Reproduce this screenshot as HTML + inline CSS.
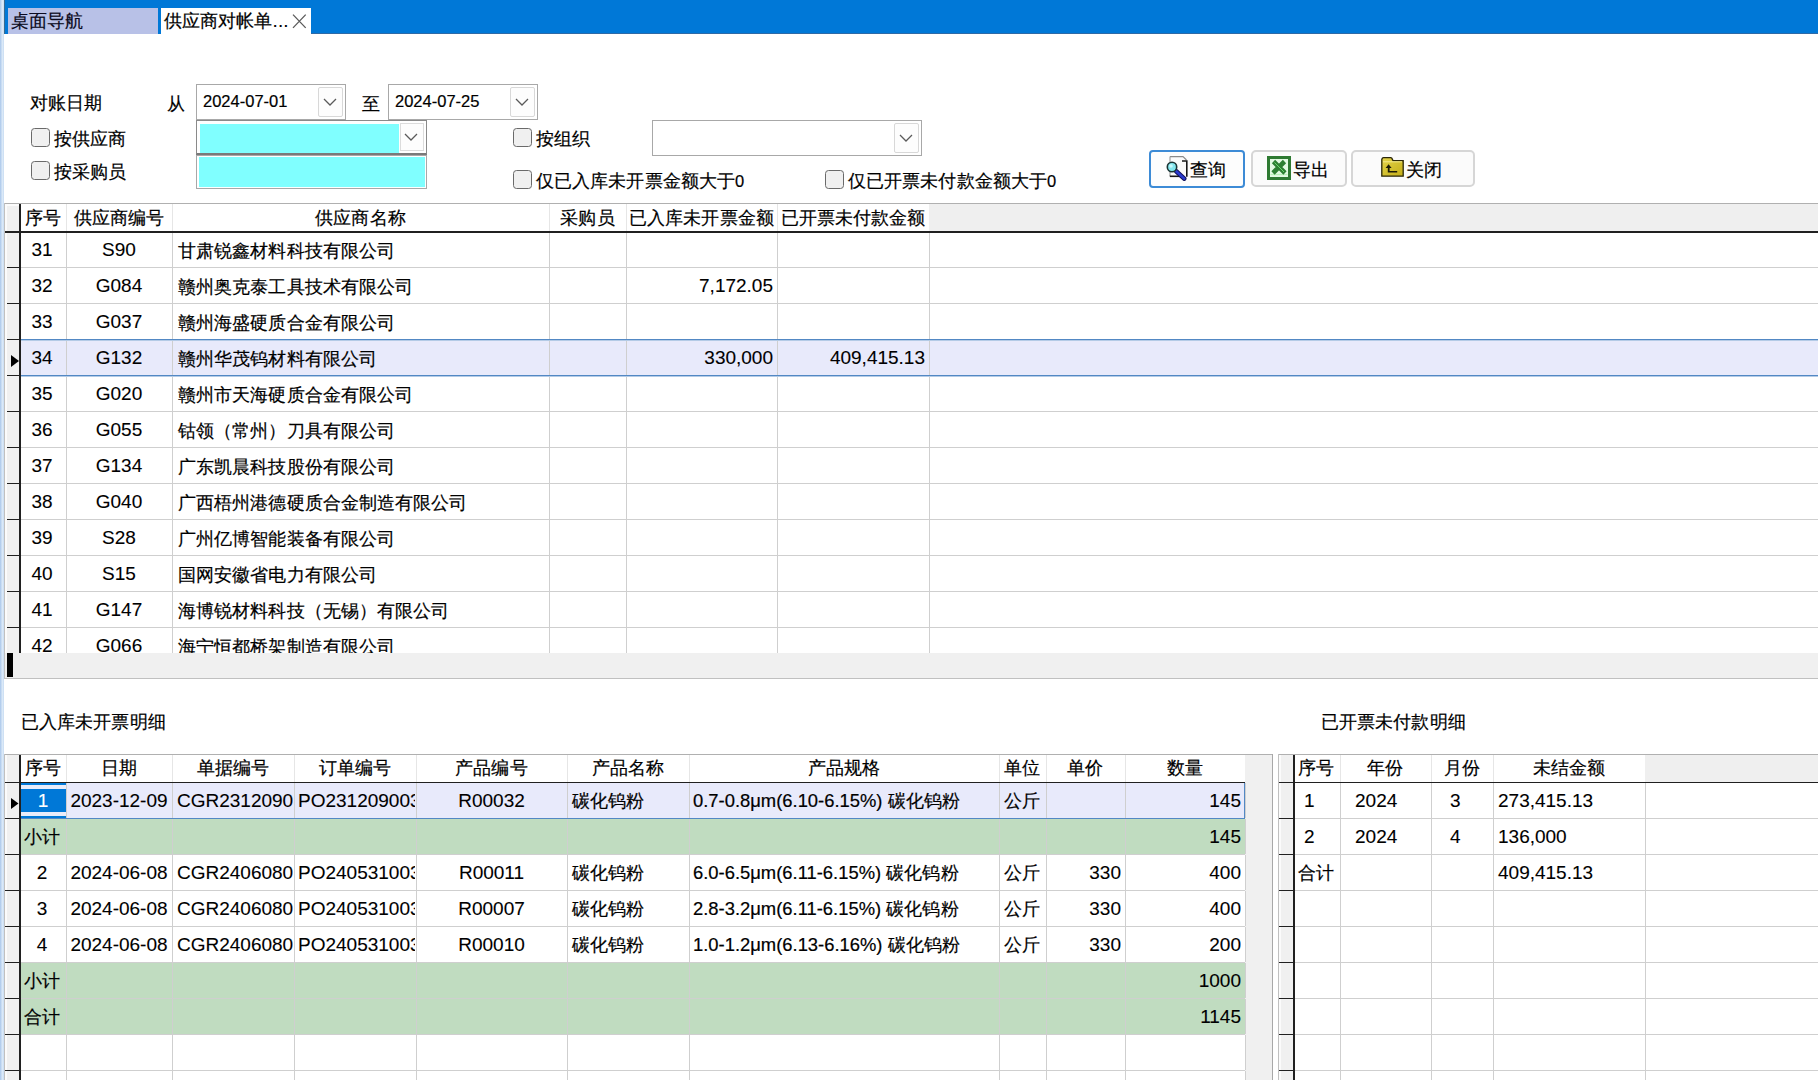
<!DOCTYPE html>
<html><head><meta charset="utf-8"><style>
html,body{margin:0;padding:0;}
body{width:1818px;height:1080px;overflow:hidden;position:relative;background:#fff;font-family:"Liberation Sans",sans-serif;font-size:18px;color:#000;}
body div{position:absolute;box-sizing:border-box;}
.t{white-space:nowrap;line-height:20px;height:20px;-webkit-text-stroke:0.2px currentColor;}
.c{font-size:18px;letter-spacing:0.1px}.l{font-size:19px;-webkit-text-stroke:0.1px currentColor}
</style></head><body>
<div style="left:0px;top:0px;width:4px;height:1080px;background:linear-gradient(90deg,#a9c6ea,#dceaf8 60%,#c8dcf2)"></div>
<div style="left:4px;top:0px;width:1814px;height:34px;background:#0078d7"></div>
<div style="left:4px;top:0px;width:1px;height:34px;background:#3a6a90"></div>
<div style="left:311px;top:33px;width:1507px;height:1px;background:#2f6aa6"></div>
<div style="left:8px;top:8px;width:150px;height:26px;background:#b8c1e7"></div>
<div style="left:161px;top:8px;width:150px;height:27px;background:#ffffff"></div>
<div class="t" style="left:11px;top:11px;color:#0a0a20"><span class="c">桌面导航</span></div>
<div class="t" style="left:164px;top:11px;color:#000"><span class="c">供应商对帐单</span><span class="l">...</span></div>
<svg style="position:absolute;left:292px;top:13px" width="15" height="16" viewBox="0 0 15 16"><path d="M1 1.6L13.7 14.9M13.7 1.6L1 14.9" stroke="#5a5a5a" stroke-width="1.3" fill="none"/></svg>
<div class="t" style="left:30px;top:93px;"><span class="c">对账日期</span></div>
<div class="t" style="left:167px;top:94px;"><span class="c">从</span></div>
<div class="t" style="left:362px;top:94px;"><span class="c">至</span></div>
<div style="left:196px;top:84px;width:150px;height:36px;background:#fff;border:1px solid #a8a8a8;box-sizing:border-box"></div>
<div style="left:318px;top:87px;width:25px;height:30px;background:#fdfdfd;border:1px solid #d8d8d8;box-sizing:border-box;border-radius:2px"></div>
<svg style="position:absolute;left:323px;top:98px" width="14" height="8" viewBox="0 0 14 8"><path d="M1 1L7.0 7L13 1" stroke="#5a5a5a" stroke-width="1.25" fill="none"/></svg>
<div class="t" style="left:203px;top:91px;font-size:16.5px">2024-07-01</div>
<div style="left:388px;top:84px;width:150px;height:36px;background:#fff;border:1px solid #a8a8a8;box-sizing:border-box"></div>
<div style="left:510px;top:87px;width:25px;height:30px;background:#fdfdfd;border:1px solid #d8d8d8;box-sizing:border-box;border-radius:2px"></div>
<svg style="position:absolute;left:515px;top:98px" width="14" height="8" viewBox="0 0 14 8"><path d="M1 1L7.0 7L13 1" stroke="#5a5a5a" stroke-width="1.25" fill="none"/></svg>
<div class="t" style="left:395px;top:91px;font-size:16.5px">2024-07-25</div>
<div style="left:196px;top:120px;width:231px;height:35px;background:#fff;border:1px solid #8a8a8a;border-bottom:2px solid #7a7a7a;box-sizing:border-box"></div>
<div style="left:200px;top:124px;width:199px;height:29px;background:#80ffff"></div>
<div style="left:400px;top:123px;width:24px;height:28px;background:#fdfdfd;border:1px solid #dcdcdc;box-sizing:border-box"></div>
<svg style="position:absolute;left:404px;top:133px" width="14" height="8" viewBox="0 0 14 8"><path d="M1 1L7.0 7L13 1" stroke="#5a5a5a" stroke-width="1.25" fill="none"/></svg>
<div style="left:196px;top:155px;width:231px;height:34px;background:#fff;border:1px solid #a8a8a8;box-sizing:border-box"></div>
<div style="left:199px;top:157px;width:226px;height:30px;background:#80ffff"></div>
<div style="left:652px;top:120px;width:270px;height:36px;background:#fff;border:1px solid #a8a8a8;box-sizing:border-box"></div>
<div style="left:894px;top:123px;width:25px;height:30px;background:#fdfdfd;border:1px solid #d8d8d8;box-sizing:border-box;border-radius:2px"></div>
<svg style="position:absolute;left:899px;top:134px" width="14" height="8" viewBox="0 0 14 8"><path d="M1 1L7.0 7L13 1" stroke="#5a5a5a" stroke-width="1.25" fill="none"/></svg>
<div style="left:31px;top:128px;width:19px;height:19px;background:#f0f0f0;border:1.8px solid #6a6a6a;box-sizing:border-box;border-radius:3.5px"></div>
<div class="t" style="left:54px;top:129px;"><span class="c">按供应商</span></div>
<div style="left:31px;top:161px;width:19px;height:19px;background:#f0f0f0;border:1.8px solid #6a6a6a;box-sizing:border-box;border-radius:3.5px"></div>
<div class="t" style="left:54px;top:162px;"><span class="c">按采购员</span></div>
<div style="left:513px;top:128px;width:19px;height:19px;background:#f0f0f0;border:1.8px solid #6a6a6a;box-sizing:border-box;border-radius:3.5px"></div>
<div class="t" style="left:536px;top:129px;"><span class="c">按组织</span></div>
<div style="left:513px;top:170px;width:19px;height:19px;background:#f0f0f0;border:1.8px solid #6a6a6a;box-sizing:border-box;border-radius:3.5px"></div>
<div class="t" style="left:536px;top:171px"><span class="c">仅已入库未开票金额大于</span><span style="font-size:16.5px">0</span></div>
<div style="left:825px;top:170px;width:19px;height:19px;background:#f0f0f0;border:1.8px solid #6a6a6a;box-sizing:border-box;border-radius:3.5px"></div>
<div class="t" style="left:848px;top:171px"><span class="c">仅已开票未付款金额大于</span><span style="font-size:16.5px">0</span></div>
<div style="left:1149px;top:150px;width:96px;height:38px;background:#fdfdfd;border:2px solid #3d8bd6;box-sizing:border-box;border-radius:4px"></div>
<div style="left:1251px;top:150px;width:96px;height:37px;background:#fbfbfb;border:2px solid #d6d6d6;box-sizing:border-box;border-radius:5px"></div>
<div style="left:1351px;top:150px;width:124px;height:37px;background:#fbfbfb;border:2px solid #d6d6d6;box-sizing:border-box;border-radius:5px"></div>
<div class="t" style="left:1190px;top:160px;"><span class="c">查询</span></div>
<div class="t" style="left:1293px;top:160px;"><span class="c">导出</span></div>
<div class="t" style="left:1406px;top:160px;"><span class="c">关闭</span></div>
<svg style="position:absolute;left:1164px;top:155px" width="26" height="26" viewBox="0 0 26 26">
<rect x="6" y="1.6" width="17" height="20" fill="#fbfbfb"/>
<path d="M6 1.6H19L22.5 5" stroke="#8a8a8a" stroke-width="1.1" fill="none"/>
<path d="M6 1.6V21" stroke="#9a9a9a" stroke-width="1.1" fill="none"/>
<path d="M18 6H22.8V21.7" stroke="#181818" stroke-width="1.6" fill="none"/>
<path d="M5.8 21.3H17" stroke="#181818" stroke-width="1.6" fill="none"/>
<path d="M12.2 16.2L20.2 23.6" stroke="#10105a" stroke-width="4.6" stroke-linecap="round"/>
<path d="M12.2 16.2L20.2 23.6" stroke="#2a3ad0" stroke-width="2.6" stroke-linecap="round"/>
<circle cx="8" cy="12" r="4.7" fill="#84e6ee" stroke="#1a3434" stroke-width="1.6"/>
<circle cx="7" cy="11" r="1.8" fill="#c8f8fa"/>
</svg>
<svg style="position:absolute;left:1267px;top:156px" width="24" height="24" viewBox="0 0 24 24">
<rect x="1.5" y="1.5" width="21" height="21" fill="#e2fae2" stroke="#2e7a32" stroke-width="3"/>
<path d="M3.5 18.5H20.5" stroke="#b8f0b8" stroke-width="1.2"/>
<path d="M6.5 5.5L18 17M17.5 5.5L6 17" stroke="#2c7f31" stroke-width="4.6"/>
<path d="M7.5 6.5L17 16" stroke="#6ad86e" stroke-width="1"/>
</svg>
<svg style="position:absolute;left:1381px;top:157px" width="23" height="20" viewBox="0 0 23 20">
<defs><linearGradient id="fg" x1="0" y1="0" x2="1" y2="1"><stop offset="0" stop-color="#e4d44a"/><stop offset="1" stop-color="#c4ae18"/></linearGradient></defs>
<path d="M0.8 3.6V19.2H22.2V3.6H12L10.8 1.2Q10.4 0.7 9.6 0.7H2.6Q1.8 0.7 1.4 1.2L0.8 2.4Z" fill="url(#fg)" stroke="#2a2608" stroke-width="1.3"/>
<path d="M2 4.8H21" stroke="#f4ea90" stroke-width="1"/>
<path d="M7.6 7.2L4.6 11H6.8V15.6H16.2V14H8.6V11H10.6Z" fill="#1c1a06"/>
</svg>
<div style="left:4px;top:203px;width:1814px;height:1px;background:#b0b0b0"></div>
<div style="left:4px;top:203px;width:1px;height:476px;background:#c0c0c0"></div>
<div style="left:5px;top:204px;width:14px;height:27px;background:#f0f0f0;border-left:2px solid #fbfbfb;border-top:2px solid #fbfbfb"></div>
<div style="left:20px;top:204px;width:909px;height:27px;background:#fff"></div>
<div style="left:929px;top:204px;width:889px;height:27px;background:#efefef"></div>
<div style="left:66px;top:204px;width:1px;height:27px;background:#e6e6e6"></div>
<div style="left:172px;top:204px;width:1px;height:27px;background:#e6e6e6"></div>
<div style="left:549px;top:204px;width:1px;height:27px;background:#e6e6e6"></div>
<div style="left:626px;top:204px;width:1px;height:27px;background:#e6e6e6"></div>
<div style="left:777px;top:204px;width:1px;height:27px;background:#e6e6e6"></div>
<div style="left:5px;top:231px;width:1813px;height:2px;background:#202020"></div>
<div style="left:5px;top:233px;width:14px;height:420px;background:#f0f0f0;border-left:2px solid #fbfbfb"></div>
<div style="left:19px;top:204px;width:2px;height:449px;background:#202020"></div>
<div class="t" style="left:20px;top:208px;width:46px;text-align:center;"><span class="c">序号</span></div>
<div class="t" style="left:66px;top:208px;width:106px;text-align:center;"><span class="c">供应商编号</span></div>
<div class="t" style="left:172px;top:208px;width:377px;text-align:center;"><span class="c">供应商名称</span></div>
<div class="t" style="left:549px;top:208px;width:77px;text-align:center;"><span class="c">采购员</span></div>
<div class="t" style="left:626px;top:208px;width:151px;text-align:center;"><span class="c">已入库未开票金额</span></div>
<div class="t" style="left:777px;top:208px;width:152px;text-align:center;"><span class="c">已开票未付款金额</span></div>
<div style="left:0;top:233px;width:1818px;height:420px;overflow:hidden">
<div style="left:66px;top:-1px;width:1px;height:35px;background:#cfcfcf"></div>
<div style="left:172px;top:-1px;width:1px;height:35px;background:#cfcfcf"></div>
<div style="left:549px;top:-1px;width:1px;height:35px;background:#cfcfcf"></div>
<div style="left:626px;top:-1px;width:1px;height:35px;background:#cfcfcf"></div>
<div style="left:777px;top:-1px;width:1px;height:35px;background:#cfcfcf"></div>
<div style="left:929px;top:-1px;width:1px;height:35px;background:#cfcfcf"></div>
<div style="left:21px;top:34px;width:1797px;height:1px;background:#cfcfcf"></div>
<div style="left:7px;top:34px;width:12px;height:1px;background:#202020"></div>
<div class="t" style="left:20px;top:7px;width:44px;text-align:center;"><span class="l">31</span></div>
<div class="t" style="left:66px;top:7px;width:106px;text-align:center;"><span class="l">S90</span></div>
<div class="t" style="left:178px;top:8px;"><span class="c">甘肃锐鑫材料科技有限公司</span></div>
<div style="left:66px;top:35px;width:1px;height:35px;background:#cfcfcf"></div>
<div style="left:172px;top:35px;width:1px;height:35px;background:#cfcfcf"></div>
<div style="left:549px;top:35px;width:1px;height:35px;background:#cfcfcf"></div>
<div style="left:626px;top:35px;width:1px;height:35px;background:#cfcfcf"></div>
<div style="left:777px;top:35px;width:1px;height:35px;background:#cfcfcf"></div>
<div style="left:929px;top:35px;width:1px;height:35px;background:#cfcfcf"></div>
<div style="left:21px;top:70px;width:1797px;height:1px;background:#cfcfcf"></div>
<div style="left:7px;top:70px;width:12px;height:1px;background:#202020"></div>
<div class="t" style="left:20px;top:43px;width:44px;text-align:center;"><span class="l">32</span></div>
<div class="t" style="left:66px;top:43px;width:106px;text-align:center;"><span class="l">G084</span></div>
<div class="t" style="left:178px;top:44px;"><span class="c">赣州奥克泰工具技术有限公司</span></div>
<div class="t" style="left:573px;top:43px;width:200px;text-align:right;"><span class="l">7,172.05</span></div>
<div style="left:66px;top:71px;width:1px;height:35px;background:#cfcfcf"></div>
<div style="left:172px;top:71px;width:1px;height:35px;background:#cfcfcf"></div>
<div style="left:549px;top:71px;width:1px;height:35px;background:#cfcfcf"></div>
<div style="left:626px;top:71px;width:1px;height:35px;background:#cfcfcf"></div>
<div style="left:777px;top:71px;width:1px;height:35px;background:#cfcfcf"></div>
<div style="left:929px;top:71px;width:1px;height:35px;background:#cfcfcf"></div>
<div style="left:21px;top:106px;width:1797px;height:1px;background:#5288c4"></div>
<div style="left:7px;top:106px;width:12px;height:1px;background:#202020"></div>
<div class="t" style="left:20px;top:79px;width:44px;text-align:center;"><span class="l">33</span></div>
<div class="t" style="left:66px;top:79px;width:106px;text-align:center;"><span class="l">G037</span></div>
<div class="t" style="left:178px;top:80px;"><span class="c">赣州海盛硬质合金有限公司</span></div>
<div style="left:21px;top:107px;width:1797px;height:35px;background:#e8eafb"></div>
<div style="left:66px;top:107px;width:1px;height:35px;background:#cfcfcf"></div>
<div style="left:172px;top:107px;width:1px;height:35px;background:#cfcfcf"></div>
<div style="left:549px;top:107px;width:1px;height:35px;background:#cfcfcf"></div>
<div style="left:626px;top:107px;width:1px;height:35px;background:#cfcfcf"></div>
<div style="left:777px;top:107px;width:1px;height:35px;background:#cfcfcf"></div>
<div style="left:929px;top:107px;width:1px;height:35px;background:#cfcfcf"></div>
<div style="left:21px;top:142px;width:1797px;height:1px;background:#5288c4"></div>
<div style="left:7px;top:142px;width:12px;height:1px;background:#202020"></div>
<div class="t" style="left:20px;top:115px;width:44px;text-align:center;"><span class="l">34</span></div>
<div class="t" style="left:66px;top:115px;width:106px;text-align:center;"><span class="l">G132</span></div>
<div class="t" style="left:178px;top:116px;"><span class="c">赣州华茂钨材料有限公司</span></div>
<div class="t" style="left:573px;top:115px;width:200px;text-align:right;"><span class="l">330,000</span></div>
<div class="t" style="left:725px;top:115px;width:200px;text-align:right;"><span class="l">409,415.13</span></div>
<div style="left:66px;top:143px;width:1px;height:35px;background:#cfcfcf"></div>
<div style="left:172px;top:143px;width:1px;height:35px;background:#cfcfcf"></div>
<div style="left:549px;top:143px;width:1px;height:35px;background:#cfcfcf"></div>
<div style="left:626px;top:143px;width:1px;height:35px;background:#cfcfcf"></div>
<div style="left:777px;top:143px;width:1px;height:35px;background:#cfcfcf"></div>
<div style="left:929px;top:143px;width:1px;height:35px;background:#cfcfcf"></div>
<div style="left:21px;top:178px;width:1797px;height:1px;background:#cfcfcf"></div>
<div style="left:7px;top:178px;width:12px;height:1px;background:#202020"></div>
<div class="t" style="left:20px;top:151px;width:44px;text-align:center;"><span class="l">35</span></div>
<div class="t" style="left:66px;top:151px;width:106px;text-align:center;"><span class="l">G020</span></div>
<div class="t" style="left:178px;top:152px;"><span class="c">赣州市天海硬质合金有限公司</span></div>
<div style="left:66px;top:179px;width:1px;height:35px;background:#cfcfcf"></div>
<div style="left:172px;top:179px;width:1px;height:35px;background:#cfcfcf"></div>
<div style="left:549px;top:179px;width:1px;height:35px;background:#cfcfcf"></div>
<div style="left:626px;top:179px;width:1px;height:35px;background:#cfcfcf"></div>
<div style="left:777px;top:179px;width:1px;height:35px;background:#cfcfcf"></div>
<div style="left:929px;top:179px;width:1px;height:35px;background:#cfcfcf"></div>
<div style="left:21px;top:214px;width:1797px;height:1px;background:#cfcfcf"></div>
<div style="left:7px;top:214px;width:12px;height:1px;background:#202020"></div>
<div class="t" style="left:20px;top:187px;width:44px;text-align:center;"><span class="l">36</span></div>
<div class="t" style="left:66px;top:187px;width:106px;text-align:center;"><span class="l">G055</span></div>
<div class="t" style="left:178px;top:188px;"><span class="c">钴领（常州）刀具有限公司</span></div>
<div style="left:66px;top:215px;width:1px;height:35px;background:#cfcfcf"></div>
<div style="left:172px;top:215px;width:1px;height:35px;background:#cfcfcf"></div>
<div style="left:549px;top:215px;width:1px;height:35px;background:#cfcfcf"></div>
<div style="left:626px;top:215px;width:1px;height:35px;background:#cfcfcf"></div>
<div style="left:777px;top:215px;width:1px;height:35px;background:#cfcfcf"></div>
<div style="left:929px;top:215px;width:1px;height:35px;background:#cfcfcf"></div>
<div style="left:21px;top:250px;width:1797px;height:1px;background:#cfcfcf"></div>
<div style="left:7px;top:250px;width:12px;height:1px;background:#202020"></div>
<div class="t" style="left:20px;top:223px;width:44px;text-align:center;"><span class="l">37</span></div>
<div class="t" style="left:66px;top:223px;width:106px;text-align:center;"><span class="l">G134</span></div>
<div class="t" style="left:178px;top:224px;"><span class="c">广东凯晨科技股份有限公司</span></div>
<div style="left:66px;top:251px;width:1px;height:35px;background:#cfcfcf"></div>
<div style="left:172px;top:251px;width:1px;height:35px;background:#cfcfcf"></div>
<div style="left:549px;top:251px;width:1px;height:35px;background:#cfcfcf"></div>
<div style="left:626px;top:251px;width:1px;height:35px;background:#cfcfcf"></div>
<div style="left:777px;top:251px;width:1px;height:35px;background:#cfcfcf"></div>
<div style="left:929px;top:251px;width:1px;height:35px;background:#cfcfcf"></div>
<div style="left:21px;top:286px;width:1797px;height:1px;background:#cfcfcf"></div>
<div style="left:7px;top:286px;width:12px;height:1px;background:#202020"></div>
<div class="t" style="left:20px;top:259px;width:44px;text-align:center;"><span class="l">38</span></div>
<div class="t" style="left:66px;top:259px;width:106px;text-align:center;"><span class="l">G040</span></div>
<div class="t" style="left:178px;top:260px;"><span class="c">广西梧州港德硬质合金制造有限公司</span></div>
<div style="left:66px;top:287px;width:1px;height:35px;background:#cfcfcf"></div>
<div style="left:172px;top:287px;width:1px;height:35px;background:#cfcfcf"></div>
<div style="left:549px;top:287px;width:1px;height:35px;background:#cfcfcf"></div>
<div style="left:626px;top:287px;width:1px;height:35px;background:#cfcfcf"></div>
<div style="left:777px;top:287px;width:1px;height:35px;background:#cfcfcf"></div>
<div style="left:929px;top:287px;width:1px;height:35px;background:#cfcfcf"></div>
<div style="left:21px;top:322px;width:1797px;height:1px;background:#cfcfcf"></div>
<div style="left:7px;top:322px;width:12px;height:1px;background:#202020"></div>
<div class="t" style="left:20px;top:295px;width:44px;text-align:center;"><span class="l">39</span></div>
<div class="t" style="left:66px;top:295px;width:106px;text-align:center;"><span class="l">S28</span></div>
<div class="t" style="left:178px;top:296px;"><span class="c">广州亿博智能装备有限公司</span></div>
<div style="left:66px;top:323px;width:1px;height:35px;background:#cfcfcf"></div>
<div style="left:172px;top:323px;width:1px;height:35px;background:#cfcfcf"></div>
<div style="left:549px;top:323px;width:1px;height:35px;background:#cfcfcf"></div>
<div style="left:626px;top:323px;width:1px;height:35px;background:#cfcfcf"></div>
<div style="left:777px;top:323px;width:1px;height:35px;background:#cfcfcf"></div>
<div style="left:929px;top:323px;width:1px;height:35px;background:#cfcfcf"></div>
<div style="left:21px;top:358px;width:1797px;height:1px;background:#cfcfcf"></div>
<div style="left:7px;top:358px;width:12px;height:1px;background:#202020"></div>
<div class="t" style="left:20px;top:331px;width:44px;text-align:center;"><span class="l">40</span></div>
<div class="t" style="left:66px;top:331px;width:106px;text-align:center;"><span class="l">S15</span></div>
<div class="t" style="left:178px;top:332px;"><span class="c">国网安徽省电力有限公司</span></div>
<div style="left:66px;top:359px;width:1px;height:35px;background:#cfcfcf"></div>
<div style="left:172px;top:359px;width:1px;height:35px;background:#cfcfcf"></div>
<div style="left:549px;top:359px;width:1px;height:35px;background:#cfcfcf"></div>
<div style="left:626px;top:359px;width:1px;height:35px;background:#cfcfcf"></div>
<div style="left:777px;top:359px;width:1px;height:35px;background:#cfcfcf"></div>
<div style="left:929px;top:359px;width:1px;height:35px;background:#cfcfcf"></div>
<div style="left:21px;top:394px;width:1797px;height:1px;background:#cfcfcf"></div>
<div style="left:7px;top:394px;width:12px;height:1px;background:#202020"></div>
<div class="t" style="left:20px;top:367px;width:44px;text-align:center;"><span class="l">41</span></div>
<div class="t" style="left:66px;top:367px;width:106px;text-align:center;"><span class="l">G147</span></div>
<div class="t" style="left:178px;top:368px;"><span class="c">海博锐材料科技（无锡）有限公司</span></div>
<div style="left:66px;top:395px;width:1px;height:35px;background:#cfcfcf"></div>
<div style="left:172px;top:395px;width:1px;height:35px;background:#cfcfcf"></div>
<div style="left:549px;top:395px;width:1px;height:35px;background:#cfcfcf"></div>
<div style="left:626px;top:395px;width:1px;height:35px;background:#cfcfcf"></div>
<div style="left:777px;top:395px;width:1px;height:35px;background:#cfcfcf"></div>
<div style="left:929px;top:395px;width:1px;height:35px;background:#cfcfcf"></div>
<div style="left:21px;top:430px;width:1797px;height:1px;background:#cfcfcf"></div>
<div style="left:7px;top:430px;width:12px;height:1px;background:#202020"></div>
<div class="t" style="left:20px;top:403px;width:44px;text-align:center;"><span class="l">42</span></div>
<div class="t" style="left:66px;top:403px;width:106px;text-align:center;"><span class="l">G066</span></div>
<div class="t" style="left:178px;top:404px;"><span class="c">海宁恒都桥架制造有限公司</span></div>
</div>
<div style="left:21px;top:339px;width:1797px;height:1px;background:#5288c4"></div>
<div style="left:21px;top:340px;width:1797px;height:1px;background:#b4cbe6"></div>
<div style="left:21px;top:376px;width:1797px;height:1px;background:#b4cbe6"></div>
<svg style="position:absolute;left:11px;top:355px" width="8" height="12" viewBox="0 0 8 12"><path d="M0 0L8 6L0 12Z" fill="#000"/></svg>
<div style="left:5px;top:653px;width:1813px;height:25px;background:#f0f0f0"></div>
<div style="left:7px;top:653px;width:6px;height:24px;background:#000"></div>
<div style="left:4px;top:678px;width:1814px;height:1px;background:#c0c0c0"></div>
<div class="t" style="left:21px;top:712px;"><span class="c">已入库未开票明细</span></div>
<div class="t" style="left:1321px;top:712px;"><span class="c">已开票未付款明细</span></div>
<div style="left:4px;top:754px;width:1269px;height:1px;background:#b0b0b0"></div>
<div style="left:4px;top:754px;width:1px;height:326px;background:#c0c0c0"></div>
<div style="left:5px;top:755px;width:14px;height:325px;background:#f0f0f0;border-left:2px solid #fbfbfb"></div>
<div style="left:20px;top:755px;width:1225px;height:27px;background:#fff"></div>
<div style="left:66px;top:755px;width:1px;height:27px;background:#e6e6e6"></div>
<div style="left:172px;top:755px;width:1px;height:27px;background:#e6e6e6"></div>
<div style="left:294px;top:755px;width:1px;height:27px;background:#e6e6e6"></div>
<div style="left:416px;top:755px;width:1px;height:27px;background:#e6e6e6"></div>
<div style="left:567px;top:755px;width:1px;height:27px;background:#e6e6e6"></div>
<div style="left:689px;top:755px;width:1px;height:27px;background:#e6e6e6"></div>
<div style="left:999px;top:755px;width:1px;height:27px;background:#e6e6e6"></div>
<div style="left:1046px;top:755px;width:1px;height:27px;background:#e6e6e6"></div>
<div style="left:1125px;top:755px;width:1px;height:27px;background:#e6e6e6"></div>
<div style="left:1245px;top:755px;width:27px;height:325px;background:#f0f0f0"></div>
<div style="left:1272px;top:754px;width:1px;height:326px;background:#a8a8a8"></div>
<div style="left:5px;top:782px;width:1240px;height:1px;background:#202020"></div>
<div style="left:19px;top:755px;width:2px;height:325px;background:#202020"></div>
<div class="t" style="left:20px;top:758px;width:46px;text-align:center;"><span class="c">序号</span></div>
<div class="t" style="left:66px;top:758px;width:106px;text-align:center;"><span class="c">日期</span></div>
<div class="t" style="left:172px;top:758px;width:122px;text-align:center;"><span class="c">单据编号</span></div>
<div class="t" style="left:294px;top:758px;width:122px;text-align:center;"><span class="c">订单编号</span></div>
<div class="t" style="left:416px;top:758px;width:151px;text-align:center;"><span class="c">产品编号</span></div>
<div class="t" style="left:567px;top:758px;width:122px;text-align:center;"><span class="c">产品名称</span></div>
<div class="t" style="left:689px;top:758px;width:310px;text-align:center;"><span class="c">产品规格</span></div>
<div class="t" style="left:999px;top:758px;width:47px;text-align:center;"><span class="c">单位</span></div>
<div class="t" style="left:1046px;top:758px;width:79px;text-align:center;"><span class="c">单价</span></div>
<div class="t" style="left:1125px;top:758px;width:120px;text-align:center;"><span class="c">数量</span></div>
<div style="left:21px;top:783px;width:1224px;height:35px;background:#e8eafb"></div>
<div style="left:66px;top:783px;width:1px;height:35px;background:#cfcfcf"></div>
<div style="left:172px;top:783px;width:1px;height:35px;background:#cfcfcf"></div>
<div style="left:294px;top:783px;width:1px;height:35px;background:#cfcfcf"></div>
<div style="left:416px;top:783px;width:1px;height:35px;background:#cfcfcf"></div>
<div style="left:567px;top:783px;width:1px;height:35px;background:#cfcfcf"></div>
<div style="left:689px;top:783px;width:1px;height:35px;background:#cfcfcf"></div>
<div style="left:999px;top:783px;width:1px;height:35px;background:#cfcfcf"></div>
<div style="left:1046px;top:783px;width:1px;height:35px;background:#cfcfcf"></div>
<div style="left:1125px;top:783px;width:1px;height:35px;background:#cfcfcf"></div>
<div style="left:1245px;top:783px;width:1px;height:35px;background:#cfcfcf"></div>
<div style="left:21px;top:818px;width:1224px;height:1px;background:#5288c4"></div>
<div style="left:5px;top:818px;width:14px;height:1px;background:#202020"></div>
<div style="left:21px;top:783px;width:45px;height:35px;background:#0078d7"></div>
<div style="left:21px;top:785px;width:45px;height:4px;background:#e8ecfa"></div>
<div style="left:21px;top:812px;width:45px;height:4px;background:#e8ecfa"></div>
<div class="t" style="left:20px;top:791px;width:46px;text-align:center;color:#fff"><span class="l">1</span></div>
<div style="left:1244px;top:783px;width:1px;height:35px;background:#5288c4"></div>
<div class="t" style="left:66px;top:791px;width:106px;text-align:center;"><span class="l">2023-12-09</span></div>
<div class="t" style="left:177px;top:791px;width:116px;overflow:hidden;height:20px"><span class="l">CGR23120900</span></div>
<div class="t" style="left:298px;top:791px;width:117px;overflow:hidden"><span class="l">PO2312090032</span></div>
<div class="t" style="left:416px;top:791px;width:151px;text-align:center;"><span class="l">R00032</span></div>
<div class="t" style="left:572px;top:791px;"><span class="c">碳化钨粉</span></div>
<div class="t" style="left:693px;top:791px"><span style="font-size:18.4px">0.7-0.8μm(6.10-6.15%) </span><span class="c">碳化钨粉</span></div>
<div class="t" style="left:999px;top:791px;width:47px;text-align:center;"><span class="c">公斤</span></div>
<div class="t" style="left:1041px;top:791px;width:200px;text-align:right;"><span class="l">145</span></div>
<div style="left:21px;top:819px;width:1224px;height:35px;background:#c0dcc0"></div>
<div style="left:66px;top:819px;width:1px;height:35px;background:#cfcfcf"></div>
<div style="left:172px;top:819px;width:1px;height:35px;background:#cfcfcf"></div>
<div style="left:294px;top:819px;width:1px;height:35px;background:#cfcfcf"></div>
<div style="left:416px;top:819px;width:1px;height:35px;background:#cfcfcf"></div>
<div style="left:567px;top:819px;width:1px;height:35px;background:#cfcfcf"></div>
<div style="left:689px;top:819px;width:1px;height:35px;background:#cfcfcf"></div>
<div style="left:999px;top:819px;width:1px;height:35px;background:#cfcfcf"></div>
<div style="left:1046px;top:819px;width:1px;height:35px;background:#cfcfcf"></div>
<div style="left:1125px;top:819px;width:1px;height:35px;background:#cfcfcf"></div>
<div style="left:1245px;top:819px;width:1px;height:35px;background:#cfcfcf"></div>
<div style="left:21px;top:854px;width:1224px;height:1px;background:#cfcfcf"></div>
<div style="left:5px;top:854px;width:14px;height:1px;background:#202020"></div>
<div class="t" style="left:24px;top:827px;"><span class="c">小计</span></div>
<div class="t" style="left:1041px;top:827px;width:200px;text-align:right;"><span class="l">145</span></div>
<div style="left:66px;top:855px;width:1px;height:35px;background:#cfcfcf"></div>
<div style="left:172px;top:855px;width:1px;height:35px;background:#cfcfcf"></div>
<div style="left:294px;top:855px;width:1px;height:35px;background:#cfcfcf"></div>
<div style="left:416px;top:855px;width:1px;height:35px;background:#cfcfcf"></div>
<div style="left:567px;top:855px;width:1px;height:35px;background:#cfcfcf"></div>
<div style="left:689px;top:855px;width:1px;height:35px;background:#cfcfcf"></div>
<div style="left:999px;top:855px;width:1px;height:35px;background:#cfcfcf"></div>
<div style="left:1046px;top:855px;width:1px;height:35px;background:#cfcfcf"></div>
<div style="left:1125px;top:855px;width:1px;height:35px;background:#cfcfcf"></div>
<div style="left:1245px;top:855px;width:1px;height:35px;background:#cfcfcf"></div>
<div style="left:21px;top:890px;width:1224px;height:1px;background:#cfcfcf"></div>
<div style="left:5px;top:890px;width:14px;height:1px;background:#202020"></div>
<div class="t" style="left:20px;top:863px;width:44px;text-align:center;"><span class="l">2</span></div>
<div class="t" style="left:66px;top:863px;width:106px;text-align:center;"><span class="l">2024-06-08</span></div>
<div class="t" style="left:177px;top:863px;width:116px;overflow:hidden;height:20px"><span class="l">CGR24060800</span></div>
<div class="t" style="left:298px;top:863px;width:117px;overflow:hidden"><span class="l">PO2405310032</span></div>
<div class="t" style="left:416px;top:863px;width:151px;text-align:center;"><span class="l">R00011</span></div>
<div class="t" style="left:572px;top:863px;"><span class="c">碳化钨粉</span></div>
<div class="t" style="left:693px;top:863px"><span style="font-size:18.4px">6.0-6.5μm(6.11-6.15%) </span><span class="c">碳化钨粉</span></div>
<div class="t" style="left:999px;top:863px;width:47px;text-align:center;"><span class="c">公斤</span></div>
<div class="t" style="left:921px;top:863px;width:200px;text-align:right;"><span class="l">330</span></div>
<div class="t" style="left:1041px;top:863px;width:200px;text-align:right;"><span class="l">400</span></div>
<div style="left:66px;top:891px;width:1px;height:35px;background:#cfcfcf"></div>
<div style="left:172px;top:891px;width:1px;height:35px;background:#cfcfcf"></div>
<div style="left:294px;top:891px;width:1px;height:35px;background:#cfcfcf"></div>
<div style="left:416px;top:891px;width:1px;height:35px;background:#cfcfcf"></div>
<div style="left:567px;top:891px;width:1px;height:35px;background:#cfcfcf"></div>
<div style="left:689px;top:891px;width:1px;height:35px;background:#cfcfcf"></div>
<div style="left:999px;top:891px;width:1px;height:35px;background:#cfcfcf"></div>
<div style="left:1046px;top:891px;width:1px;height:35px;background:#cfcfcf"></div>
<div style="left:1125px;top:891px;width:1px;height:35px;background:#cfcfcf"></div>
<div style="left:1245px;top:891px;width:1px;height:35px;background:#cfcfcf"></div>
<div style="left:21px;top:926px;width:1224px;height:1px;background:#cfcfcf"></div>
<div style="left:5px;top:926px;width:14px;height:1px;background:#202020"></div>
<div class="t" style="left:20px;top:899px;width:44px;text-align:center;"><span class="l">3</span></div>
<div class="t" style="left:66px;top:899px;width:106px;text-align:center;"><span class="l">2024-06-08</span></div>
<div class="t" style="left:177px;top:899px;width:116px;overflow:hidden;height:20px"><span class="l">CGR24060800</span></div>
<div class="t" style="left:298px;top:899px;width:117px;overflow:hidden"><span class="l">PO2405310032</span></div>
<div class="t" style="left:416px;top:899px;width:151px;text-align:center;"><span class="l">R00007</span></div>
<div class="t" style="left:572px;top:899px;"><span class="c">碳化钨粉</span></div>
<div class="t" style="left:693px;top:899px"><span style="font-size:18.4px">2.8-3.2μm(6.11-6.15%) </span><span class="c">碳化钨粉</span></div>
<div class="t" style="left:999px;top:899px;width:47px;text-align:center;"><span class="c">公斤</span></div>
<div class="t" style="left:921px;top:899px;width:200px;text-align:right;"><span class="l">330</span></div>
<div class="t" style="left:1041px;top:899px;width:200px;text-align:right;"><span class="l">400</span></div>
<div style="left:66px;top:927px;width:1px;height:35px;background:#cfcfcf"></div>
<div style="left:172px;top:927px;width:1px;height:35px;background:#cfcfcf"></div>
<div style="left:294px;top:927px;width:1px;height:35px;background:#cfcfcf"></div>
<div style="left:416px;top:927px;width:1px;height:35px;background:#cfcfcf"></div>
<div style="left:567px;top:927px;width:1px;height:35px;background:#cfcfcf"></div>
<div style="left:689px;top:927px;width:1px;height:35px;background:#cfcfcf"></div>
<div style="left:999px;top:927px;width:1px;height:35px;background:#cfcfcf"></div>
<div style="left:1046px;top:927px;width:1px;height:35px;background:#cfcfcf"></div>
<div style="left:1125px;top:927px;width:1px;height:35px;background:#cfcfcf"></div>
<div style="left:1245px;top:927px;width:1px;height:35px;background:#cfcfcf"></div>
<div style="left:21px;top:962px;width:1224px;height:1px;background:#cfcfcf"></div>
<div style="left:5px;top:962px;width:14px;height:1px;background:#202020"></div>
<div class="t" style="left:20px;top:935px;width:44px;text-align:center;"><span class="l">4</span></div>
<div class="t" style="left:66px;top:935px;width:106px;text-align:center;"><span class="l">2024-06-08</span></div>
<div class="t" style="left:177px;top:935px;width:116px;overflow:hidden;height:20px"><span class="l">CGR24060800</span></div>
<div class="t" style="left:298px;top:935px;width:117px;overflow:hidden"><span class="l">PO2405310032</span></div>
<div class="t" style="left:416px;top:935px;width:151px;text-align:center;"><span class="l">R00010</span></div>
<div class="t" style="left:572px;top:935px;"><span class="c">碳化钨粉</span></div>
<div class="t" style="left:693px;top:935px"><span style="font-size:18.4px">1.0-1.2μm(6.13-6.16%) </span><span class="c">碳化钨粉</span></div>
<div class="t" style="left:999px;top:935px;width:47px;text-align:center;"><span class="c">公斤</span></div>
<div class="t" style="left:921px;top:935px;width:200px;text-align:right;"><span class="l">330</span></div>
<div class="t" style="left:1041px;top:935px;width:200px;text-align:right;"><span class="l">200</span></div>
<div style="left:21px;top:963px;width:1224px;height:35px;background:#c0dcc0"></div>
<div style="left:66px;top:963px;width:1px;height:35px;background:#cfcfcf"></div>
<div style="left:172px;top:963px;width:1px;height:35px;background:#cfcfcf"></div>
<div style="left:294px;top:963px;width:1px;height:35px;background:#cfcfcf"></div>
<div style="left:416px;top:963px;width:1px;height:35px;background:#cfcfcf"></div>
<div style="left:567px;top:963px;width:1px;height:35px;background:#cfcfcf"></div>
<div style="left:689px;top:963px;width:1px;height:35px;background:#cfcfcf"></div>
<div style="left:999px;top:963px;width:1px;height:35px;background:#cfcfcf"></div>
<div style="left:1046px;top:963px;width:1px;height:35px;background:#cfcfcf"></div>
<div style="left:1125px;top:963px;width:1px;height:35px;background:#cfcfcf"></div>
<div style="left:1245px;top:963px;width:1px;height:35px;background:#cfcfcf"></div>
<div style="left:21px;top:998px;width:1224px;height:1px;background:#cfcfcf"></div>
<div style="left:5px;top:998px;width:14px;height:1px;background:#202020"></div>
<div class="t" style="left:24px;top:971px;"><span class="c">小计</span></div>
<div class="t" style="left:1041px;top:971px;width:200px;text-align:right;"><span class="l">1000</span></div>
<div style="left:21px;top:999px;width:1224px;height:35px;background:#c0dcc0"></div>
<div style="left:66px;top:999px;width:1px;height:35px;background:#cfcfcf"></div>
<div style="left:172px;top:999px;width:1px;height:35px;background:#cfcfcf"></div>
<div style="left:294px;top:999px;width:1px;height:35px;background:#cfcfcf"></div>
<div style="left:416px;top:999px;width:1px;height:35px;background:#cfcfcf"></div>
<div style="left:567px;top:999px;width:1px;height:35px;background:#cfcfcf"></div>
<div style="left:689px;top:999px;width:1px;height:35px;background:#cfcfcf"></div>
<div style="left:999px;top:999px;width:1px;height:35px;background:#cfcfcf"></div>
<div style="left:1046px;top:999px;width:1px;height:35px;background:#cfcfcf"></div>
<div style="left:1125px;top:999px;width:1px;height:35px;background:#cfcfcf"></div>
<div style="left:1245px;top:999px;width:1px;height:35px;background:#cfcfcf"></div>
<div style="left:21px;top:1034px;width:1224px;height:1px;background:#cfcfcf"></div>
<div style="left:5px;top:1034px;width:14px;height:1px;background:#202020"></div>
<div class="t" style="left:24px;top:1007px;"><span class="c">合计</span></div>
<div class="t" style="left:1041px;top:1007px;width:200px;text-align:right;"><span class="l">1145</span></div>
<div style="left:66px;top:1035px;width:1px;height:35px;background:#cfcfcf"></div>
<div style="left:172px;top:1035px;width:1px;height:35px;background:#cfcfcf"></div>
<div style="left:294px;top:1035px;width:1px;height:35px;background:#cfcfcf"></div>
<div style="left:416px;top:1035px;width:1px;height:35px;background:#cfcfcf"></div>
<div style="left:567px;top:1035px;width:1px;height:35px;background:#cfcfcf"></div>
<div style="left:689px;top:1035px;width:1px;height:35px;background:#cfcfcf"></div>
<div style="left:999px;top:1035px;width:1px;height:35px;background:#cfcfcf"></div>
<div style="left:1046px;top:1035px;width:1px;height:35px;background:#cfcfcf"></div>
<div style="left:1125px;top:1035px;width:1px;height:35px;background:#cfcfcf"></div>
<div style="left:1245px;top:1035px;width:1px;height:35px;background:#cfcfcf"></div>
<div style="left:21px;top:1070px;width:1224px;height:1px;background:#cfcfcf"></div>
<div style="left:5px;top:1070px;width:14px;height:1px;background:#202020"></div>
<div style="left:66px;top:1071px;width:1px;height:9px;background:#cfcfcf"></div>
<div style="left:172px;top:1071px;width:1px;height:9px;background:#cfcfcf"></div>
<div style="left:294px;top:1071px;width:1px;height:9px;background:#cfcfcf"></div>
<div style="left:416px;top:1071px;width:1px;height:9px;background:#cfcfcf"></div>
<div style="left:567px;top:1071px;width:1px;height:9px;background:#cfcfcf"></div>
<div style="left:689px;top:1071px;width:1px;height:9px;background:#cfcfcf"></div>
<div style="left:999px;top:1071px;width:1px;height:9px;background:#cfcfcf"></div>
<div style="left:1046px;top:1071px;width:1px;height:9px;background:#cfcfcf"></div>
<div style="left:1125px;top:1071px;width:1px;height:9px;background:#cfcfcf"></div>
<div style="left:1245px;top:1071px;width:1px;height:9px;background:#cfcfcf"></div>
<svg style="position:absolute;left:11px;top:798px" width="8" height="11" viewBox="0 0 8 11"><path d="M0 0L7.5 5.5L0 11Z" fill="#000"/></svg>
<div style="left:1278px;top:754px;width:540px;height:1px;background:#b0b0b0"></div>
<div style="left:1278px;top:754px;width:1px;height:326px;background:#c0c0c0"></div>
<div style="left:1279px;top:755px;width:14px;height:325px;background:#f0f0f0;border-left:2px solid #fbfbfb"></div>
<div style="left:1293px;top:755px;width:352px;height:27px;background:#fff"></div>
<div style="left:1645px;top:755px;width:173px;height:27px;background:#efefef"></div>
<div style="left:1340px;top:755px;width:1px;height:27px;background:#e6e6e6"></div>
<div style="left:1431px;top:755px;width:1px;height:27px;background:#e6e6e6"></div>
<div style="left:1493px;top:755px;width:1px;height:27px;background:#e6e6e6"></div>
<div style="left:1279px;top:782px;width:539px;height:1px;background:#202020"></div>
<div style="left:1293px;top:755px;width:2px;height:325px;background:#202020"></div>
<div class="t" style="left:1293px;top:758px;width:47px;text-align:center;"><span class="c">序号</span></div>
<div class="t" style="left:1340px;top:758px;width:91px;text-align:center;"><span class="c">年份</span></div>
<div class="t" style="left:1431px;top:758px;width:62px;text-align:center;"><span class="c">月份</span></div>
<div class="t" style="left:1493px;top:758px;width:152px;text-align:center;"><span class="c">未结金额</span></div>
<div style="left:1340px;top:783px;width:1px;height:35px;background:#cfcfcf"></div>
<div style="left:1431px;top:783px;width:1px;height:35px;background:#cfcfcf"></div>
<div style="left:1493px;top:783px;width:1px;height:35px;background:#cfcfcf"></div>
<div style="left:1645px;top:783px;width:1px;height:35px;background:#cfcfcf"></div>
<div style="left:1295px;top:818px;width:523px;height:1px;background:#cfcfcf"></div>
<div style="left:1279px;top:818px;width:14px;height:1px;background:#202020"></div>
<div class="t" style="left:1304px;top:791px;"><span class="l">1</span></div>
<div class="t" style="left:1355px;top:791px;"><span class="l">2024</span></div>
<div class="t" style="left:1450px;top:791px;"><span class="l">3</span></div>
<div class="t" style="left:1498px;top:791px;"><span class="l">273,415.13</span></div>
<div style="left:1340px;top:819px;width:1px;height:35px;background:#cfcfcf"></div>
<div style="left:1431px;top:819px;width:1px;height:35px;background:#cfcfcf"></div>
<div style="left:1493px;top:819px;width:1px;height:35px;background:#cfcfcf"></div>
<div style="left:1645px;top:819px;width:1px;height:35px;background:#cfcfcf"></div>
<div style="left:1295px;top:854px;width:523px;height:1px;background:#cfcfcf"></div>
<div style="left:1279px;top:854px;width:14px;height:1px;background:#202020"></div>
<div class="t" style="left:1304px;top:827px;"><span class="l">2</span></div>
<div class="t" style="left:1355px;top:827px;"><span class="l">2024</span></div>
<div class="t" style="left:1450px;top:827px;"><span class="l">4</span></div>
<div class="t" style="left:1498px;top:827px;"><span class="l">136,000</span></div>
<div style="left:1340px;top:855px;width:1px;height:35px;background:#cfcfcf"></div>
<div style="left:1431px;top:855px;width:1px;height:35px;background:#cfcfcf"></div>
<div style="left:1493px;top:855px;width:1px;height:35px;background:#cfcfcf"></div>
<div style="left:1645px;top:855px;width:1px;height:35px;background:#cfcfcf"></div>
<div style="left:1295px;top:890px;width:523px;height:1px;background:#cfcfcf"></div>
<div style="left:1279px;top:890px;width:14px;height:1px;background:#202020"></div>
<div class="t" style="left:1298px;top:863px;"><span class="c">合计</span></div>
<div class="t" style="left:1498px;top:863px;"><span class="l">409,415.13</span></div>
<div style="left:1340px;top:891px;width:1px;height:35px;background:#cfcfcf"></div>
<div style="left:1431px;top:891px;width:1px;height:35px;background:#cfcfcf"></div>
<div style="left:1493px;top:891px;width:1px;height:35px;background:#cfcfcf"></div>
<div style="left:1645px;top:891px;width:1px;height:35px;background:#cfcfcf"></div>
<div style="left:1295px;top:926px;width:523px;height:1px;background:#cfcfcf"></div>
<div style="left:1279px;top:926px;width:14px;height:1px;background:#202020"></div>
<div style="left:1340px;top:927px;width:1px;height:35px;background:#cfcfcf"></div>
<div style="left:1431px;top:927px;width:1px;height:35px;background:#cfcfcf"></div>
<div style="left:1493px;top:927px;width:1px;height:35px;background:#cfcfcf"></div>
<div style="left:1645px;top:927px;width:1px;height:35px;background:#cfcfcf"></div>
<div style="left:1295px;top:962px;width:523px;height:1px;background:#cfcfcf"></div>
<div style="left:1279px;top:962px;width:14px;height:1px;background:#202020"></div>
<div style="left:1340px;top:963px;width:1px;height:35px;background:#cfcfcf"></div>
<div style="left:1431px;top:963px;width:1px;height:35px;background:#cfcfcf"></div>
<div style="left:1493px;top:963px;width:1px;height:35px;background:#cfcfcf"></div>
<div style="left:1645px;top:963px;width:1px;height:35px;background:#cfcfcf"></div>
<div style="left:1295px;top:998px;width:523px;height:1px;background:#cfcfcf"></div>
<div style="left:1279px;top:998px;width:14px;height:1px;background:#202020"></div>
<div style="left:1340px;top:999px;width:1px;height:35px;background:#cfcfcf"></div>
<div style="left:1431px;top:999px;width:1px;height:35px;background:#cfcfcf"></div>
<div style="left:1493px;top:999px;width:1px;height:35px;background:#cfcfcf"></div>
<div style="left:1645px;top:999px;width:1px;height:35px;background:#cfcfcf"></div>
<div style="left:1295px;top:1034px;width:523px;height:1px;background:#cfcfcf"></div>
<div style="left:1279px;top:1034px;width:14px;height:1px;background:#202020"></div>
<div style="left:1340px;top:1035px;width:1px;height:35px;background:#cfcfcf"></div>
<div style="left:1431px;top:1035px;width:1px;height:35px;background:#cfcfcf"></div>
<div style="left:1493px;top:1035px;width:1px;height:35px;background:#cfcfcf"></div>
<div style="left:1645px;top:1035px;width:1px;height:35px;background:#cfcfcf"></div>
<div style="left:1295px;top:1070px;width:523px;height:1px;background:#cfcfcf"></div>
<div style="left:1279px;top:1070px;width:14px;height:1px;background:#202020"></div>
<div style="left:1340px;top:1071px;width:1px;height:9px;background:#cfcfcf"></div>
<div style="left:1431px;top:1071px;width:1px;height:9px;background:#cfcfcf"></div>
<div style="left:1493px;top:1071px;width:1px;height:9px;background:#cfcfcf"></div>
<div style="left:1645px;top:1071px;width:1px;height:9px;background:#cfcfcf"></div>
</body></html>
